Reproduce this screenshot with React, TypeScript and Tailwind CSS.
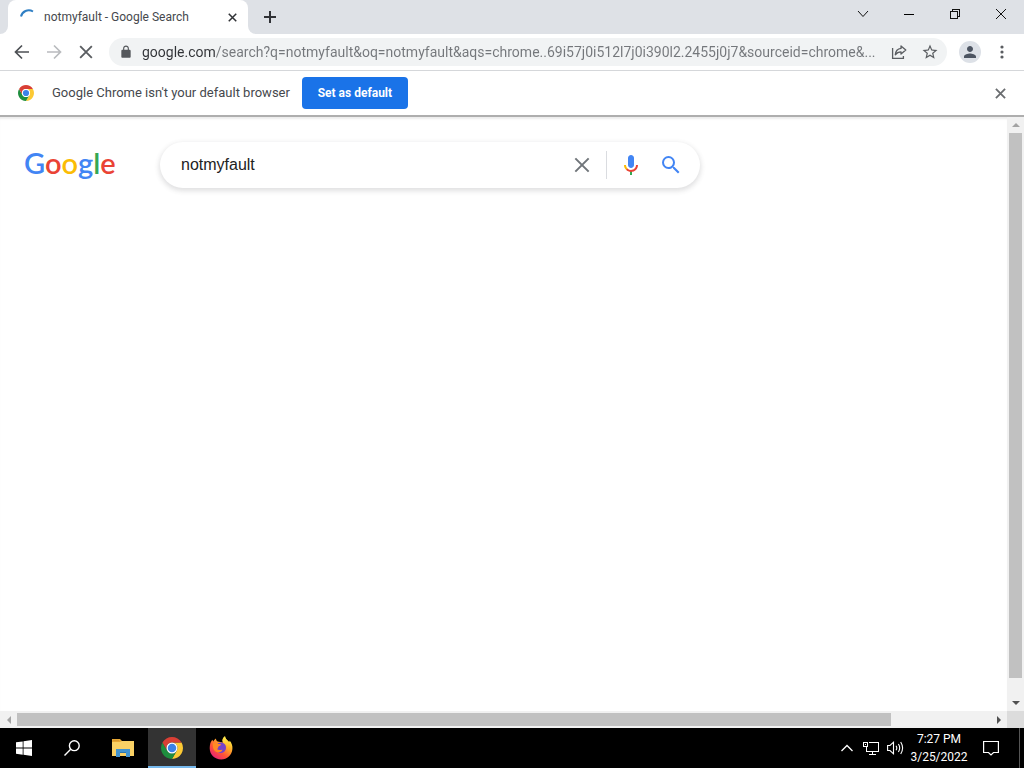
import React from "react";

type IconProps = { className?: string };

function ChromeIcon({ className }: IconProps) {
  return (
    <svg viewBox="0 0 48 48" className={className} aria-hidden="true">
      <path fill="#fcc934" d="M24 12H44.78A24 24 0 0 1 24 48L34.39 30A12 12 0 0 0 24 12" />
      <path fill="#1e8e3e" d="M13.61 30L3.22 12A24 24 0 0 0 24 48L34.39 30A12 12 0 0 1 13.61 30" />
      <path fill="#d93f35" d="M24 12H44.78A24 24 0 0 0 3.22 12L13.61 30A12 12 0 0 1 24 12" />
      <circle cx="24" cy="24" r="12" fill="#fff" />
      <circle cx="24" cy="24" r="9.3" fill="#3b82e8" />
    </svg>
  );
}

function Cross({ className, w = 2 }: IconProps & { w?: number }) {
  return (
    <svg viewBox="0 0 12 12" className={className} fill="none" stroke="currentColor" strokeWidth={w} aria-hidden="true">
      <path d="M1 1L11 11M11 1L1 11" />
    </svg>
  );
}

function TabStrip() {
  return (
    <header className="flex h-[34px] shrink-0 items-stretch bg-[#dee1e6]">
      <div className="flex w-2 items-end bg-white">
        <div className="h-full w-full rounded-br-lg bg-[#dee1e6]" />
      </div>
      <div className="flex w-60 bg-[#dee1e6]">
        <div className="flex w-full items-center rounded-t-lg bg-white pl-3 pr-2">
          <svg viewBox="0 0 16 16" className="size-4 shrink-0" fill="none" stroke="#2f7fc4" strokeWidth="2" aria-hidden="true">
            <path d="M1 7.5C2 2.5 8 -.5 13 2.5" />
          </svg>
          <h1 className="ml-2 flex-1 whitespace-nowrap text-xs text-[#45484d]">notmyfault - Google Search</h1>
          <button aria-label="Close tab" className="flex size-4 items-center justify-center text-[#303236]">
            <Cross className="size-[9px]" />
          </button>
        </div>
      </div>
      <div className="flex w-2 bg-white">
        <div className="h-full w-full rounded-bl-lg bg-[#dee1e6]" />
      </div>
      <button aria-label="New tab" className="flex w-7 items-center justify-center">
        <svg viewBox="0 0 12 12" className="size-3" stroke="#303236" strokeWidth="2" aria-hidden="true">
          <path d="M6 0V12M0 6H12" />
        </svg>
      </button>
      <div className="ml-auto flex h-7 text-[#111]">
        <button aria-label="Search tabs" className="flex w-[46px] items-center justify-center">
          <svg viewBox="0 0 12 8" className="h-2 w-3" fill="none" stroke="currentColor" aria-hidden="true">
            <path d="M1 1L6 6.5L11 1" />
          </svg>
        </button>
        <button aria-label="Minimize" className="flex w-[46px] items-center justify-center">
          <span className="h-px w-[10px] bg-black" />
        </button>
        <button aria-label="Restore" className="flex w-[46px] items-center justify-center">
          <svg viewBox="0 0 10 10" className="size-[10px]" fill="none" stroke="currentColor" shapeRendering="crispEdges" aria-hidden="true">
            <path d="M.5 2.5H7.5V9.5H.5ZM2.5 2.5V.5H9.5V7.5H7.5" />
          </svg>
        </button>
        <button aria-label="Close window" className="flex w-[46px] items-center justify-center">
          <Cross className="size-3" w={1} />
        </button>
      </div>
    </header>
  );
}

function Toolbar() {
  return (
    <nav className="flex h-[37px] shrink-0 items-center border-b border-[#d5d7da] bg-white pl-[6px] pr-[14px] text-[#5a5d61]">
      <button aria-label="Back" className="flex size-8 items-center justify-center text-[#4d5054]">
        <svg viewBox="0 0 16 16" className="size-4" fill="none" stroke="currentColor" strokeWidth="1.7" aria-hidden="true">
          <path d="M15 8H2M8 1.5L1.5 8L8 14.5" />
        </svg>
      </button>
      <button aria-label="Forward" className="flex size-8 items-center justify-center text-[#b9bbbe]">
        <svg viewBox="0 0 16 16" className="size-4" fill="none" stroke="currentColor" strokeWidth="1.7" aria-hidden="true">
          <path d="M1 8H14M8 1.5L14.5 8L8 14.5" />
        </svg>
      </button>
      <button aria-label="Stop loading" className="flex size-8 items-center justify-center">
        <Cross className="size-[14px]" w={1.6} />
      </button>
      <div className="ml-[7px] flex h-7 min-w-0 flex-1 items-center rounded-full bg-[#f1f3f4] pl-[10px] pr-2">
        <svg viewBox="0 0 24 24" className="size-[14px] shrink-0" fill="#55585c" aria-hidden="true">
          <path d="M18 8h-1V6c0-2.76-2.24-5-5-5S7 3.24 7 6v2H6c-1.1 0-2 .9-2 2v10c0 1.1.9 2 2 2h12c1.1 0 2-.9 2-2V10c0-1.1-.9-2-2-2zM9 6c0-1.66 1.34-3 3-3s3 1.34 3 3v2H9z" />
        </svg>
        <input
          aria-label="Address"
          className="ml-[9px] h-6 min-w-0 flex-1 bg-[linear-gradient(90deg,#303236_73px,#74777b_73px)] bg-clip-text text-sm text-transparent outline-none"
          defaultValue="google.com/search?q=notmyfault&oq=notmyfault&aqs=chrome..69i57j0i512l7j0i390l2.2455j0j7&sourceid=chrome&..."
        />
        <button aria-label="Share" className="ml-2 flex size-4 shrink-0 items-center justify-center">
          <svg viewBox="0 0 16 16" className="size-4" fill="none" stroke="currentColor" strokeWidth="1.3" aria-hidden="true">
            <path d="M1.6 4V14.3H12.4V12" />
            <path d="M10 2L14.8 6L10 10V7.800C7.500 7.800 5.800 8.600 4.300 10.800C4.600 7.300 6.700 4.700 10 4.400Z" strokeLinejoin="round" />
          </svg>
        </button>
        <button aria-label="Bookmark this tab" className="ml-[14px] flex size-[18px] shrink-0 items-center justify-center">
          <svg viewBox="0 0 24 24" className="size-[18px]" fill="currentColor" aria-hidden="true">
            <path d="M22 9.24l-7.19-.62L12 2 9.19 8.63 2 9.24l5.46 4.73L5.82 21 12 17.27 18.18 21l-1.63-7.03L22 9.24zM12 15.4l-3.76 2.27 1-4.28-3.32-2.88 4.38-.38L12 6.1l1.71 4.04 4.38.38-3.32 2.88 1 4.28L12 15.4z" />
          </svg>
        </button>
      </div>
      <button aria-label="Profile" className="ml-3 flex size-[22px] items-center justify-center rounded-full bg-[#dde1e7]">
        <svg viewBox="0 0 24 24" className="size-[18px]" fill="#4d5562" aria-hidden="true">
          <path d="M12 12c2.200 0 4-1.800 4-4s-1.800-4-4-4-4 1.800-4 4 1.800 4 4 4zm0 2c-2.700 0-8 1.300-8 4v2h16v-2c0-2.700-5.300-4-8-4z" />
        </svg>
      </button>
      <button aria-label="Menu" className="ml-[13px] flex h-6 w-4 items-center justify-center">
        <svg viewBox="0 0 4 14" className="h-[14px] w-1" fill="currentColor" aria-hidden="true">
          <circle cx="2" cy="2" r="1.6" />
          <circle cx="2" cy="7" r="1.6" />
          <circle cx="2" cy="12" r="1.6" />
        </svg>
      </button>
    </nav>
  );
}

function InfoBar() {
  return (
    <section className="flex h-[46px] shrink-0 items-center border-b-2 border-[#aeaeae] bg-white pl-[18px] pr-[18px]">
      <ChromeIcon className="size-4" />
      <p className="ml-[18px] whitespace-nowrap text-[13px] text-[#45484d]">Google Chrome isn't your default browser</p>
      <button className="ml-3 h-8 w-[106px] whitespace-nowrap rounded bg-[#1a73e8] text-xs font-bold text-white">Set as default</button>
      <button aria-label="Dismiss" className="ml-auto flex size-3 items-center justify-center text-[#6a6d70]">
        <Cross className="size-[11px]" />
      </button>
    </section>
  );
}

function SearchHeader() {
  return (
    <div className="flex items-start pl-6 pt-[25px]">
      <a href="#" aria-label="Google" className="w-[136px] shrink-0 font-['Lato',sans-serif] text-[29px] font-semibold leading-[42px]">
        <span className="text-[#4285f4]">G</span>
        <span className="text-[#ea4335]">o</span>
        <span className="text-[#fbbc05]">o</span>
        <span className="text-[#4285f4]">g</span>
        <span className="text-[#34a853]">l</span>
        <span className="text-[#ea4335]">e</span>
      </a>
      <form className="flex h-[46px] w-[540px] items-center rounded-full bg-white pl-[21px] pr-[17px] shadow-[0_2px_5px_1px_rgba(64,60,67,0.16)]">
        <input
          aria-label="Search"
          defaultValue="notmyfault"
          className="min-w-0 flex-1 font-['Liberation_Sans',sans-serif] text-base text-[#222] outline-none"
        />
        <button type="button" aria-label="Clear" className="flex size-6 items-center justify-center text-[#70757a]">
          <Cross className="size-4" w={1.5} />
        </button>
        <span className="ml-3 h-7 w-px bg-[#dadce0]" />
        <button type="button" aria-label="Search by voice" className="ml-3 flex size-6 items-center justify-center">
          <svg viewBox="0 0 24 24" className="size-6" aria-hidden="true">
            <path fill="#4285f4" d="M12 15c1.66 0 3-1.310 3-2.970V5.010C15 3.350 13.660 2 12 2S9 3.340 9 5.010v7.020C9 13.690 10.340 15 12 15z" />
            <path fill="#34a853" d="M11 18.080h2V22h-2z" />
            <path fill="#fbbc05" d="M7.050 16.870C5.780 15.540 5 14.040 5 12h2c0 1.450.560 2.420 1.470 3.380v.320l-1.150 1.180z" />
            <path fill="#ea4335" d="M12 16.930a4.970 5.250 0 0 1-3.540-1.550l-1.410 1.490C8.310 18.210 10.070 19 12 19c3.870 0 6.990-2.920 6.990-7H17c0 2.920-2.240 4.930-5 4.930z" />
          </svg>
        </button>
        <button aria-label="Google Search" className="ml-4 flex size-6 items-center justify-center">
          <svg viewBox="0 0 24 24" className="size-6" fill="#4285f4" aria-hidden="true">
            <path d="M15.500 14h-.790l-.280-.270A6.471 6.471 0 0 0 16 9.500 6.500 6.500 0 1 0 9.500 16c1.610 0 3.090-.590 4.230-1.570l.270.280v.790l5 4.990L20.490 19l-4.990-5zm-6 0C7.010 14 5 11.990 5 9.500S7.010 5 9.500 5 14 7.010 14 9.500 11.990 14 9.500 14z" />
          </svg>
        </button>
      </form>
    </div>
  );
}

function Arrow({ d, label, className, fill }: { d: string; label: string; className: string; fill: string }) {
  return (
    <button aria-label={label} className={className}>
      <svg viewBox="0 0 8 8" className="size-2" fill={fill} aria-hidden="true">
        <path d={d} />
      </svg>
    </button>
  );
}

function Page() {
  return (
    <>
      <div className="flex min-h-0 flex-1">
        <main className="min-w-0 flex-1 bg-white shadow-[inset_0_3px_2px_-1px_#ececec]">
          <SearchHeader />
        </main>
        <div className="flex w-[17px] flex-col items-center bg-[#f1f1f1]">
          <Arrow label="Scroll up" d="M0 6L4 2L8 6Z" fill="#a3a3a3" className="flex h-4 w-full items-center justify-center" />
          <div className="min-h-0 w-[13px] flex-1 bg-[#c1c1c1]" />
          <div className="h-4" />
          <Arrow label="Scroll down" d="M0 2L4 6L8 2Z" fill="#505050" className="flex h-[17px] w-full items-center justify-center" />
        </div>
      </div>
      <div className="flex h-[17px] shrink-0 items-center bg-[#f1f1f1]">
        <Arrow label="Scroll left" d="M6 0L2 4L6 8Z" fill="#a3a3a3" className="flex h-full w-[17px] items-center justify-center" />
        <div className="h-[13px] flex-1 bg-[#c1c1c1]" />
        <div className="w-[99px]" />
        <Arrow label="Scroll right" d="M2 0L6 4L2 8Z" fill="#505050" className="flex h-full w-[17px] items-center justify-center" />
        <div className="h-full w-[17px] bg-[#dcdcdc]" />
      </div>
    </>
  );
}

function FirefoxIcon() {
  return (
    <svg viewBox="0 0 24 24" className="size-6" aria-hidden="true">
      <defs>
        <linearGradient id="fxBody" x1=".85" y1=".1" x2=".2" y2=".95">
          <stop offset="0" stopColor="#fff044" />
          <stop offset=".35" stopColor="#ffa22b" />
          <stop offset=".65" stopColor="#ff5436" />
          <stop offset="1" stopColor="#e72277" />
        </linearGradient>
        <linearGradient id="fxTail" x1=".5" y1="0" x2=".5" y2="1">
          <stop offset="0" stopColor="#fff14f" />
          <stop offset="1" stopColor="#ff980e" />
        </linearGradient>
      </defs>
      <path fill="url(#fxBody)" d="M1.300 7.600C1.800 5.700 2.900 4.300 3.600 3.800C3.600 4.400 3.900 5.200 4.200 5.600C5 4.700 5.400 3.600 7 2.600C7 4 7.500 5 8.600 5.600L14 6.500C12.300 3.600 14.500 1.300 16 .3C16.200 3 18 3.800 19.700 5.400C20.300 6 20.700 5.500 20.600 4.400C22.900 7 23.700 10 23.400 13C22.900 19 18.100 23.500 12.200 23.500C5.600 23.500.700 18.600.700 12.300C.700 10.600.900 9 1.300 7.600Z" />
      <path fill="#7542c9" d="M7.300 9.500C8.300 7.200 11 6 13.500 6.800C16.300 7.700 17.600 10.500 16.800 13.200C16 16 13.300 17.500 10.500 16.900C8.200 16.400 6.600 14.500 6.700 12.300Z" />
      <path fill="#ff8a24" d="M4 7.200C5.600 6.300 7.800 6.500 9.200 8C10 7.900 11.500 8 12.100 8.400C11.700 9.600 10 10.100 9.300 10.700C9.200 12 8.500 12.500 8.200 13.200C9.600 14.600 11.500 13.500 13.500 13.700C12.500 16.300 9 17.400 6.500 15.500C4.100 13.700 3.300 10.300 4 7.200Z" />
      <path fill="url(#fxTail)" d="M16 .3C16.200 3 18.500 4.200 20 6.500C22 9.700 21.700 13.800 19.800 16.200C20 12.500 18 8.400 14.500 6.800C12.600 4.400 14.500 1.300 16 .3Z" />
    </svg>
  );
}

function Taskbar() {
  return (
    <footer className="flex h-10 shrink-0 items-stretch bg-black text-white">
      <button aria-label="Start" className="flex w-12 items-center justify-center">
        <svg viewBox="0 0 16 16" className="size-4" fill="#fff" aria-hidden="true">
          <path d="M0 2.300L6.700 1.400V7.500H0ZM7.500 1.300L16 0V7.500H7.500ZM0 8.400H6.700V14.700L0 13.700ZM7.500 8.400H16V16L7.500 14.800Z" />
        </svg>
      </button>
      <button aria-label="Search Windows" className="flex w-12 items-center justify-center">
        <svg viewBox="0 0 16 16" className="size-4" fill="none" stroke="#fff" strokeWidth="1.400" aria-hidden="true">
          <circle cx="10.300" cy="5.700" r="4.900" />
          <path d="M6.700 9.300L.500 15.500" />
        </svg>
      </button>
      <button aria-label="File Explorer" className="ml-px flex w-[51px] items-center justify-center">
        <svg viewBox="0 0 22 20" className="h-5 w-[22px]" aria-hidden="true">
          <path fill="#e6a735" d="M0 1H8L10 3H21V5H0Z" />
          <path fill="#fad165" d="M0 4H8L10 3H22V18H0Z" />
          <path fill="#d9992e" d="M1 2H7V3H1Z" />
          <path fill="#4293cf" d="M4 11H18V19H14V15H8V19H4Z" />
          <path fill="#2e76ad" d="M8 14H14V15H8Z" />
        </svg>
      </button>
      <button aria-label="Google Chrome" className="flex w-12 items-center justify-center border-b-2 border-[#76b9ed] bg-[#333] pt-[2px]">
        <ChromeIcon className="size-[22px]" />
      </button>
      <button aria-label="Firefox" className="flex w-[50px] items-center justify-center">
        <FirefoxIcon />
      </button>
      <div className="ml-auto flex items-stretch">
        <button aria-label="Show hidden icons" className="flex w-6 items-center justify-center">
          <svg viewBox="0 0 12 8" className="h-2 w-3" fill="none" stroke="#fff" strokeWidth="1.300" aria-hidden="true">
            <path d="M.500 7L6 1.500L11.500 7" />
          </svg>
        </button>
        <button aria-label="Network" className="flex w-6 items-center justify-center">
          <svg viewBox="0 0 16 14" className="h-[14px] w-4" fill="none" stroke="#fff" shapeRendering="crispEdges" aria-hidden="true">
            <path d="M5.500 1.500H15.500V10.500H3.500V6M9.500 10.500V13.500M6 13.500H13M.500 1.500H4.500V5.500H.500ZM2.500 3V4" />
          </svg>
        </button>
        <button aria-label="Volume" className="flex w-6 items-center justify-center">
          <svg viewBox="0 0 17 16" className="h-4 w-[17px]" fill="none" stroke="#fff" strokeWidth="1.100" aria-hidden="true">
            <path d="M.600 5.500H3L6.500 2.200V13.800L3 10.500H.600ZM9 5.800Q10.600 8 9 10.200M11.400 4Q14 8 11.400 12M13.700 2Q17.500 8 13.700 14" />
          </svg>
        </button>
        <button className="flex w-16 flex-col items-center justify-center whitespace-nowrap text-xs leading-[18px]">
          <span>7:27 PM</span>
          <span>3/25/2022</span>
        </button>
        <button aria-label="Notifications" className="flex w-10 items-center justify-center">
          <svg viewBox="0 0 16 16" className="size-4" fill="none" stroke="#fff" strokeWidth="1.200" aria-hidden="true">
            <path d="M.600 1.500H15.400V12.500H10.500L8 15L5.500 12.500H.600Z" />
          </svg>
        </button>
        <button aria-label="Show desktop" className="ml-2 w-[5px] border-l border-[#555]" />
      </div>
    </footer>
  );
}

export default function App() {
  return (
    <div className="flex h-screen flex-col overflow-hidden bg-white font-['Roboto','Open_Sans',sans-serif]">
      <TabStrip />
      <Toolbar />
      <InfoBar />
      <Page />
      <Taskbar />
    </div>
  );
}
